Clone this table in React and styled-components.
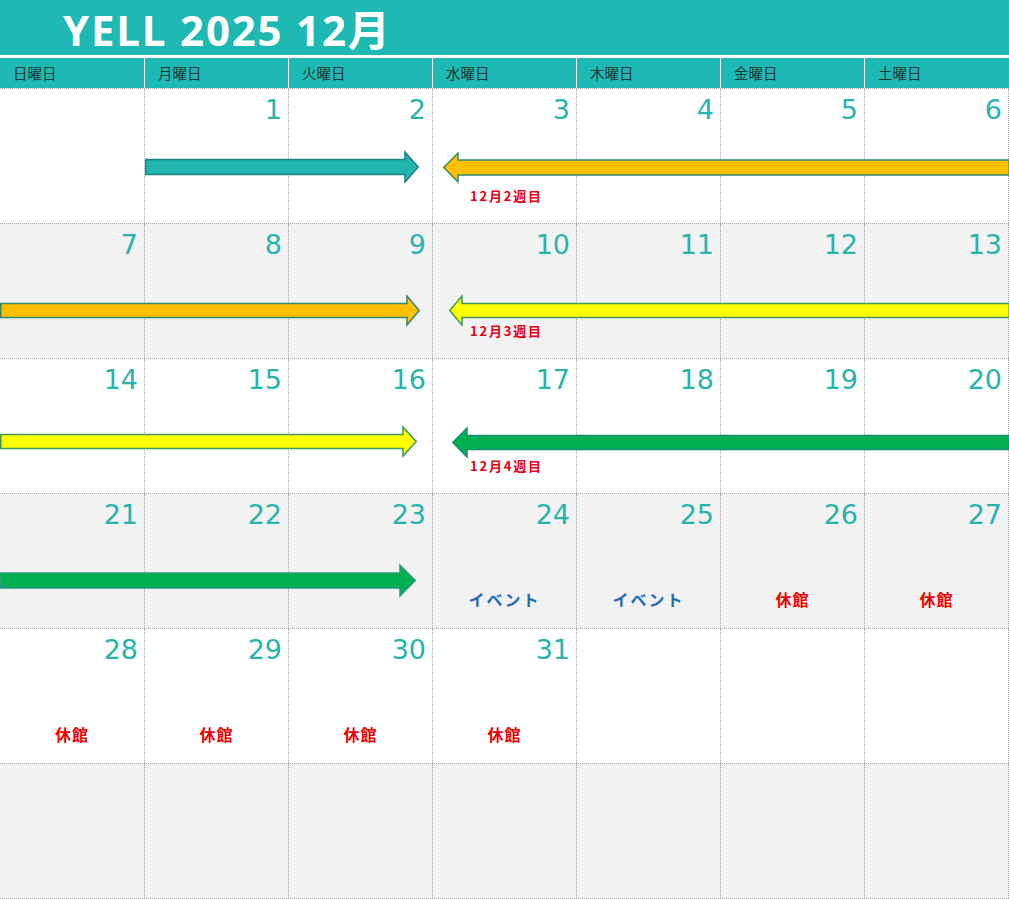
import React from 'react';
import styled, { createGlobalStyle } from 'styled-components';

const TEAL = '#1fb9b4';
const DATE_COLOR = '#27b4ad';
const GRID_LINE = '#a8a8a8';

const GlobalStyle = createGlobalStyle`
	html, body {
		margin: 0;
		padding: 0;
		background: #ffffff;
	}
	body {
		font-family: "Noto Sans CJK JP", "Noto Sans", sans-serif;
	}
`;

const Page = styled.main`
	width: 1009px;
	background: #ffffff;
`;

const TitleBar = styled.header`
	height: 55px;
	background: ${ TEAL };
	display: flex;
	align-items: center;
	padding-left: 63px;
	margin-bottom: 3px;
`;

const Title = styled.h1`
	margin: 0;
	color: #ffffff;
	font-family: "Open Sans", "Noto Sans CJK JP", sans-serif;
	font-weight: 700;
	font-size: 42px;
	letter-spacing: 1.8px;
	line-height: 1;
	padding-top: 4px;
`;

const WeekHeader = styled.div`
	display: grid;
	grid-template-columns: 145px repeat(6, 144px);
	height: 30px;
`;

const WeekdayCell = styled.div`
	background: ${ TEAL };
	border-right: 1px solid #ffffff;
	color: #1f3a3a;
	font-size: 14.5px;
	line-height: 30px;
	padding-left: 13px;

	&:last-child {
		border-right: none;
	}
`;

const WeekRow = styled.div`
	position: relative;
	display: grid;
	grid-template-columns: 145px repeat(6, 144px);
	height: 135px;
	box-sizing: border-box;
	border-top: 1px dotted ${ GRID_LINE };
	background: ${ ({ $shaded }) => $shaded ? '#f2f2f2' : '#ffffff' };

	&:last-child {
		height: 136px;
		border-bottom: 1px dotted ${ GRID_LINE };
	}
`;

const Cell = styled.div`
	display: flex;
	flex-direction: column;
	border-right: 1px dotted ${ GRID_LINE };
`;

const DayNum = styled.div`
	font-family: "DejaVu Sans", Verdana, sans-serif;
	font-size: 27px;
	line-height: 32px;
	height: 32px;
	padding: 5px 6px 0 0;
	text-align: right;
	color: ${ DATE_COLOR };
`;

const Note = styled.div`
	margin-top: ${ ({ $top }) => $top }px;
	font-weight: 700;
	line-height: 20px;
	text-align: ${ ({ $align }) => $align };
	color: ${ ({ $color }) => $color };
	font-size: ${ ({ $size }) => $size }px;
	letter-spacing: ${ ({ $spacing }) => $spacing }px;
	padding-left: ${ ({ $indent }) => $indent }px;
`;

const ArrowSvg = styled.svg`
	position: absolute;
	overflow: visible;
	pointer-events: none;
	transform: ${ ({ $dir }) => $dir === 'left' ? 'scaleX(-1)' : 'none' };
`;

const Arrow = ({ from, to, center, shaft, head, headLen, fill, stroke, dir }) => {
	const len = to - from;
	const h = head + 2;
	const c = h / 2;
	const s = shaft / 2;
	const hh = head / 2;
	const b = len - headLen;
	const points = [
		[0.75, c - s], [b, c - s], [b, c - hh], [len - 0.75, c],
		[b, c + hh], [b, c + s], [0.75, c + s],
	].map(p => p.join(',')).join(' ');

	return (
		<ArrowSvg
			$dir={ dir }
			width={ len }
			height={ h }
			style={ { left: from, top: center - c } }
		>
			<polygon points={ points } fill={ fill } stroke={ stroke } strokeWidth="1.5" strokeLinejoin="miter" />
		</ArrowSvg>
	);
};

const WEEKDAYS = ['日曜日', '月曜日', '火曜日', '水曜日', '木曜日', '金曜日', '土曜日'];

const NOTE_STYLES = {
	week: { $align: 'left', $color: '#e60012', $size: 13, $spacing: 1.8, $indent: 37, $top: 60 },
	event: { $align: 'center', $color: '#1f6db4', $size: 16, $spacing: 2, $indent: 0, $top: 58 },
	closed: { $align: 'center', $color: '#ee0000', $size: 16, $spacing: 1, $indent: 0, $top: 58 },
};

const weeks = [
	{
		days: [null, 1, 2, 3, 4, 5, 6],
		notes: { 3: ['week', '12月2週目'] },
		arrows: [
			{ from: 145, to: 419, center: 78, shaft: 15, head: 30, headLen: 14, fill: '#20b5ae', stroke: '#1a8580', dir: 'right' },
			{ from: 443, to: 1010, center: 78, shaft: 15, head: 29, headLen: 15, fill: '#ffc000', stroke: '#2f8a6c', dir: 'left' },
		],
	},
	{
		days: [7, 8, 9, 10, 11, 12, 13],
		notes: { 3: ['week', '12月3週目'] },
		arrows: [
			{ from: 0, to: 420, center: 86, shaft: 14, head: 29, headLen: 13, fill: '#ffc000', stroke: '#2f8a6c', dir: 'right' },
			{ from: 449, to: 1010, center: 86, shaft: 14, head: 29, headLen: 13, fill: '#ffff00', stroke: '#3a9a62', dir: 'left' },
		],
	},
	{
		days: [14, 15, 16, 17, 18, 19, 20],
		notes: { 3: ['week', '12月4週目'] },
		arrows: [
			{ from: 0, to: 417, center: 82, shaft: 14, head: 29, headLen: 14, fill: '#ffff00', stroke: '#3a9a62', dir: 'right' },
			{ from: 452, to: 1010, center: 83, shaft: 14, head: 29, headLen: 15, fill: '#00b050', stroke: '#1f8a75', dir: 'left' },
		],
	},
	{
		days: [21, 22, 23, 24, 25, 26, 27],
		notes: { 3: ['event', 'イベント'], 4: ['event', 'イベント'], 5: ['closed', '休館'], 6: ['closed', '休館'] },
		arrows: [
			{ from: 0, to: 416, center: 86, shaft: 15, head: 31, headLen: 16, fill: '#00b050', stroke: '#2a9a80', dir: 'right' },
		],
	},
	{
		days: [28, 29, 30, 31, null, null, null],
		notes: { 0: ['closed', '休館'], 1: ['closed', '休館'], 2: ['closed', '休館'], 3: ['closed', '休館'] },
		arrows: [],
	},
	{
		days: [null, null, null, null, null, null, null],
		notes: {},
		arrows: [],
	},
];

const App = () => {
	return (
		<Page>
			<GlobalStyle />
			<TitleBar>
				<Title>YELL 2025 12月</Title>
			</TitleBar>
			<WeekHeader>
				{ WEEKDAYS.map(name => (
					<WeekdayCell key={ name }>{ name }</WeekdayCell>
				)) }
			</WeekHeader>
			{ weeks.map((week, wi) => (
				<WeekRow key={ wi } $shaded={ wi % 2 === 1 }>
					{ week.days.map((day, di) => {
						const note = week.notes[di];
						return (
							<Cell key={ di }>
								<DayNum>{ day ?? '' }</DayNum>
								{ note && <Note { ...NOTE_STYLES[note[0]] }>{ note[1] }</Note> }
							</Cell>
						);
					}) }
					{ week.arrows.map((a, ai) => (
						<Arrow key={ ai } { ...a } />
					)) }
				</WeekRow>
			)) }
		</Page>
	);
}

export default App;
